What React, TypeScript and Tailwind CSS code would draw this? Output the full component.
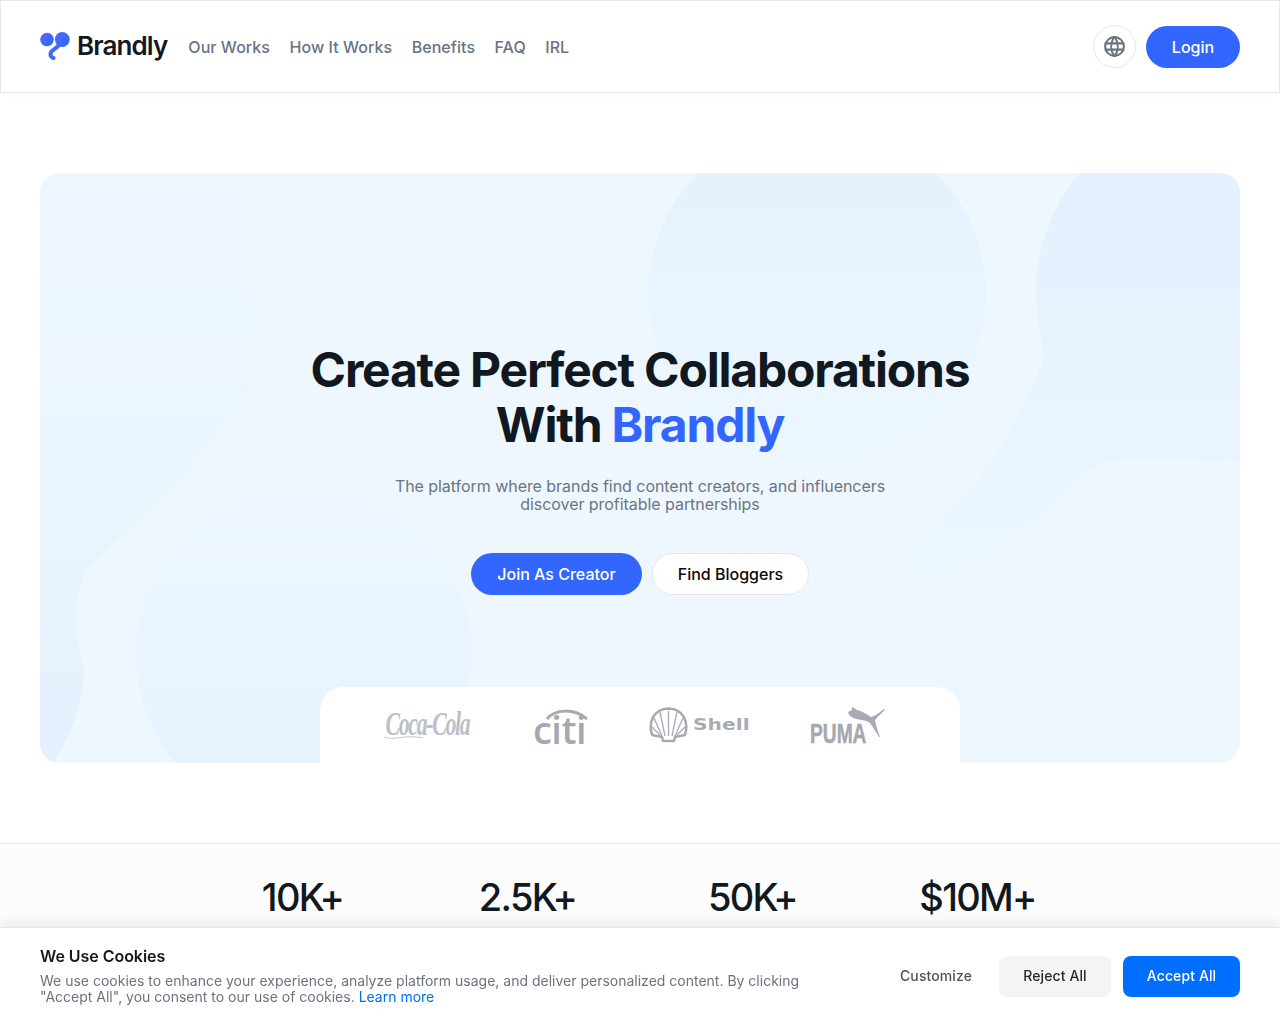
import React from "react";
import { TbWorld } from "react-icons/tb";

function LogoMark() {
  return (
    <svg width="30" height="30" viewBox="0 0 30 30" className="shrink-0 -mt-[2px]">
      <defs>
        <linearGradient id="lg" x1="0" y1="0" x2="1" y2="1">
          <stop offset="0" stopColor="#4f6bff" />
          <stop offset="1" stopColor="#2f66f3" />
        </linearGradient>
      </defs>
      <circle cx="7" cy="8.5" r="6.8" fill="url(#lg)" />
      <circle cx="22.3" cy="8.5" r="7.4" fill="url(#lg)" />
      <path d="M19 13 C18 18 11 18 10.5 22.5 C10.3 25 11.5 26.5 13.5 27" fill="none" stroke="url(#lg)" strokeWidth="4" strokeLinecap="round" />
    </svg>
  );
}

function HeroShapes() {
  return (
    <svg className="absolute inset-0 w-full h-full" viewBox="0 0 1200 590" preserveAspectRatio="none" aria-hidden="true">
      <defs>
        <linearGradient id="f1" x1="0" y1="0" x2="0" y2="1">
          <stop offset="0" stopColor="#e3f1fe" />
          <stop offset="1" stopColor="#edf7fe" />
        </linearGradient>
        <linearGradient id="f2" x1="0" y1="0" x2="0" y2="1">
          <stop offset="0" stopColor="#e3f0fe" />
          <stop offset="1" stopColor="#ecf6ff" />
        </linearGradient>
        <linearGradient id="f3" x1="0" y1="0" x2="0" y2="1">
          <stop offset="0" stopColor="#eef7fe" />
          <stop offset="1" stopColor="#e4f1fe" />
        </linearGradient>
        <linearGradient id="f4" x1="0" y1="0" x2="0" y2="1">
          <stop offset="0" stopColor="#eef7fe" />
          <stop offset="0.5" stopColor="#ebf5fe" />
          <stop offset="1" stopColor="#e4f0fe" />
        </linearGradient>
      </defs>
      <path d="M0 0 H190 C215 80 215 160 205 224 C190 260 100 345 50 395 C32 415 32 460 44 497 C44 530 30 565 13 590 H0 Z" fill="url(#f4)" />
      <circle cx="264" cy="482" r="168" fill="url(#f3)" />
      <circle cx="777" cy="120" r="169" fill="url(#f1)" />
      <path d="M1040 0 H1200 V289 C1150 284 1100 284 1069 287 C1040 293 1000 350 939 391 C900 410 870 400 853 385 C920 340 980 260 1004 183 C1000 160 996 140 996 117 C996 70 1015 30 1040 0 Z" fill="url(#f2)" />
    </svg>
  );
}

function BrandLogos() {
  return (
    <div className="relative z-10 mt-auto w-[640px] h-[76px] bg-white rounded-t-[24px] flex items-start pl-[63px]">
      <div className="w-[88px] h-[40px] mt-[17px] relative flex items-center justify-center">
        <span className="font-['Liberation_Serif',serif] italic font-bold text-[33px] leading-none tracking-[-2px] text-[#bcc0c6] whitespace-nowrap inline-block scale-x-[0.66]">Coca-Cola</span>
        <svg className="absolute left-0 top-[26px]" width="44" height="12" viewBox="0 0 44 12" aria-hidden="true">
          <path d="M1 7 C10 11 22 4 40 8" fill="none" stroke="#c3c6cc" strokeWidth="1" />
        </svg>
      </div>
      <div className="ml-[62px] w-[54px] mt-[20px] relative h-[38px]">
        <svg className="absolute left-[5px] top-0" width="50" height="14" viewBox="0 0 50 14" aria-hidden="true">
          <path d="M9 12 C17 2 36 1 49 12" fill="none" stroke="#a7aab3" strokeWidth="3" />
        </svg>
        <span className="absolute left-0 bottom-[-3px] font-['Open_Sans',sans-serif] font-semibold text-[38px] leading-none tracking-[-0.5px] text-[#a5a8b1]">citi</span>
      </div>
      <div className="ml-[62px] w-[101px] mt-[20px] flex items-center gap-[5px]">
        <svg width="39" height="36" viewBox="0 0 39 36" fill="none" stroke="#a7aab3" className="shrink-0" aria-hidden="true">
          <path d="M3 28 C-1 14 5 2 19.5 1.5 C34 2 40 14 36 28 L26 30 L25 34 H14 L13 30 Z" strokeWidth="2.6" strokeLinejoin="round" fill="#fff" />
          <path d="M19.5 29 V4 M16 29 L11 5 M23 29 L28 5 M13 29 L5 11 M26 29 L34 11 M11 28 L3 20 M28 28 L36 20" strokeWidth="1.3" />
        </svg>
        <span className="font-['DejaVu_Sans',sans-serif] font-bold text-[15px] leading-none text-[#a8abb3] inline-block origin-left scale-x-[1.35]">Shell</span>
      </div>
      <div className="ml-[60px] mt-[18px] w-[76px] h-[40px] relative">
        <svg className="absolute left-[36px] top-[2px]" width="40" height="32" viewBox="0 0 40 32" fill="#a7aab3" aria-hidden="true">
          <path d="M3 8 L2 5 L6 3 L6 0 L11 3 C16 4 20 7 25 10 C29 9 33 6 38 2 L39 3 C35 6 32 10 29 13 C30 19 32 25 34 30 L33 30 C30 25 27 20 24 16 C20 13 15 13 10 12 C8 11 5 10 3 8 Z" />
        </svg>
        <span className="absolute left-0 bottom-0 font-['Liberation_Sans',sans-serif] font-bold text-[27px] leading-[22px] [-webkit-text-stroke:0.5px_#a5a8b1] text-[#a5a8b1] inline-block origin-bottom-left scale-x-[0.71]">PUMA</span>
      </div>
    </div>
  );
}

export default function App() {
  return (
    <div className="h-screen overflow-hidden bg-white font-['Inter',sans-serif] flex flex-col">
      <header className="h-[93px] shrink-0 border border-[#e5e7eb] bg-white flex items-center px-[39px] shadow-[0_1px_6px_rgba(0,0,0,0.03)]">
        <div className="flex items-center gap-[7px]">
          <LogoMark />
          <span className="text-[26px] font-semibold tracking-[-0.9px] text-[#14181f] leading-none -mt-[2px]">Brandly</span>
        </div>
        <nav className="ml-[21px] flex items-center gap-[19.5px] text-base font-medium tracking-[0.05px] text-[#687385]">
          <span>Our Works</span>
          <span>How It Works</span>
          <span>Benefits</span>
          <span>FAQ</span>
          <span>IRL</span>
        </nav>
        <div className="ml-auto flex items-center gap-[10px]">
          <div className="w-[43px] h-[43px] rounded-full border border-[#e5e7eb] bg-white flex items-center justify-center text-[#6b7280]">
            <TbWorld size={25} />
          </div>
          <button className="w-[94px] h-[42px] rounded-full bg-[#3366ff] text-white text-base font-medium">Login</button>
        </div>
      </header>

      <main className="px-10 pt-[80px] shrink-0">
        <section className="relative h-[590px] rounded-[20px] overflow-hidden bg-[#eef7fe] flex flex-col items-center">
          <HeroShapes />
          <div className="relative z-10 flex flex-col items-center pt-[169px]">
            <h1 className="text-[48px] leading-[55px] font-bold tracking-[-1.2px] text-center text-[#11181f]">
              Create Perfect Collaborations
              <br />
              With <span className="text-[#3366ff]">Brandly</span>
            </h1>
            <p className="mt-[25px] w-[520px] text-base leading-[18px] tracking-[-0.05px] text-center text-[#6b7485]">
              The platform where brands find content creators, and influencers discover profitable partnerships
            </p>
            <div className="mt-[40px] flex items-center gap-[10px]">
              <button className="w-[171px] h-[42px] rounded-full bg-[#3366ff] text-white text-base font-medium">Join As Creator</button>
              <button className="w-[157px] h-[42px] rounded-full bg-white border border-[#e5e7eb] text-[#0a0a0a] text-base font-medium">Find Bloggers</button>
            </div>
          </div>
          <BrandLogos />
        </section>
      </main>

      <section className="mt-[80px] flex-1 border-t border-[#e5e7eb] bg-[#fcfcfc]">
        <div className="mx-auto w-[900px] grid grid-cols-4 text-center pt-[30px] text-[38px] leading-[46px] font-medium tracking-[-1.7px] text-[#11181f]">
          <div>10K+</div>
          <div>2.5K+</div>
          <div>50K+</div>
          <div>$10M+</div>
        </div>
      </section>

      <aside className="fixed bottom-0 inset-x-0 h-[97px] bg-white border-t border-[#e5e7eb] shadow-[0_-4px_12px_rgba(0,0,0,0.08)] flex items-center justify-between px-10">
        <div className="w-[780px]">
          <h2 className="text-base leading-[18px] font-semibold tracking-[-0.05px] text-[#14181f]">We Use Cookies</h2>
          <p className="mt-[8px] text-sm leading-4 text-[#6b7280]">
            We use cookies to enhance your experience, analyze platform usage, and deliver personalized content. By clicking "Accept All", you consent to our use of cookies. <span className="text-[#006fee]">Learn more</span>
          </p>
        </div>
        <div className="flex items-center">
          <button className="text-sm font-medium tracking-[0.1px] text-[#52525b] mr-[27px] pb-[1px]">Customize</button>
          <button className="w-[112px] h-[41px] rounded-lg bg-[#f4f4f5] text-sm font-medium tracking-[0.1px] text-[#27272a] mr-[12px]">Reject All</button>
          <button className="w-[117px] h-[41px] rounded-lg bg-[#006fff] text-sm font-medium tracking-[0.1px] text-white">Accept All</button>
        </div>
      </aside>
    </div>
  );
}
